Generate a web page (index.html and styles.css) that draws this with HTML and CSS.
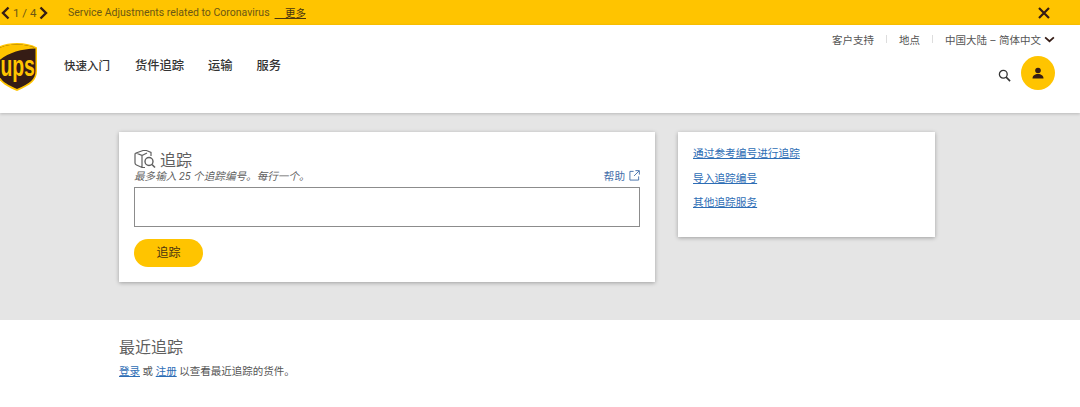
FILE: index.html
```html
<!DOCTYPE html>
<html lang="zh">
<head>
<meta charset="utf-8">
<title>UPS 追踪</title>
<link rel="stylesheet" href="styles.css">
</head>
<body>
<div class="alert">
  <div class="pager">
    <svg class="chev" viewBox="0 0 9 14" width="9" height="14"><path d="M7.500 1.500 2 7l5.500 5.500" fill="none" stroke="#351c15" stroke-width="2.400"/></svg>
    <span class="count">1 / 4</span>
    <svg class="chev" viewBox="0 0 9 14" width="9" height="14"><path d="M1.500 1.500 7 7l-5.500 5.500" fill="none" stroke="#351c15" stroke-width="2.400"/></svg>
  </div>
  <span class="alert-text">Service Adjustments related to Coronavirus</span>
  <a class="alert-more">&nbsp;&nbsp;&nbsp;&nbsp;更多</a>
  <svg class="close" viewBox="0 0 12 12" width="12" height="12"><path d="M1 1l10 10M11 1 1 11" stroke="#351c15" stroke-width="2.200"/></svg>
</div>
<header class="header">
  <svg class="logo" viewBox="0 0 40 48" width="40" height="48">
    <path d="M20 0C12 0 5 1.500 0 4.500V28c0 9 6 14 20 20 14-6 20-11 20-20V4.500C35 1.500 28 0 20 0Z" fill="#ffc400"/>
    <path d="M20 1.500C13 1.500 7 2.500 1.500 5.500V28c0 8 5.500 12.500 18.500 18 13-5.500 18.500-10 18.500-18V5.500C33 2.500 27 1.500 20 1.500Z" fill="#351c15"/>
    <path d="M1.500 5.500V18C10 10 24 6 38.500 5.500 33 2.500 27 1.500 20 1.500 13 1.500 7 2.500 1.500 5.500Z" fill="#ffc400"/>
    <text class="logo-text" x="3.400" y="33" textLength="34.500" lengthAdjust="spacingAndGlyphs">ups</text>
  </svg>
  <nav class="main-nav">
    <a class="nav-first">快速入门</a>
    <a>货件追踪</a>
    <a>运输</a>
    <a>服务</a>
  </nav>
  <div class="header-right">
    <div class="util">
      <a>客户支持</a><i></i><a>地点</a><i></i><a>中国大陆 – 简体中文</a>
      <svg viewBox="0 0 12 8" width="11" height="7"><path d="M1 1.500 6 6l5-4.500" fill="none" stroke="#351c15" stroke-width="2"/></svg>
    </div>
    <div class="actions">
      <svg class="search" viewBox="0 0 14 14" width="13" height="13"><circle cx="5.700" cy="5.700" r="4.200" fill="none" stroke="#333" stroke-width="1.400"/><path d="M8.800 8.800 13 13" stroke="#333" stroke-width="1.700"/></svg>
      <span class="avatar"><svg viewBox="0 0 12 12" width="12" height="12"><circle cx="6" cy="3.500" r="2.800" fill="#351c15"/><path d="M0.500 11.500c0-3 2.500-4.500 5.500-4.500s5.500 1.500 5.500 4.500Z" fill="#351c15"/></svg></span>
    </div>
  </div>
</header>
<main class="band">
  <section class="card track">
    <div class="title-row">
      <svg class="title-icon" viewBox="0 0 22 20" width="22" height="20"><path d="M2 4 9 1.500h3.500L17 3.500V7M2 4c-1 0-1 1-1 2v8c0 1 .5 1.500 1.500 2L8 18.500h3M2 4l6 2.500v12M8 6.500 13 4" fill="none" stroke="#5f5f5f" stroke-width="1.200"/><circle cx="15" cy="12.500" r="4" fill="none" stroke="#5f5f5f" stroke-width="1.400"/><path d="M18 15.500l3 3" stroke="#5f5f5f" stroke-width="1.600"/></svg>
      <h1>追踪</h1>
    </div>
    <div class="hint-row">
      <em>最多输入 25 个追踪编号。每行一个。</em>
      <a class="help">帮助
        <svg viewBox="0 0 12 12" width="11" height="11"><path d="M5 1.500H1v9.500h9.500V7M7 .7h4.300V5M11 1 5.500 6.500" fill="none" stroke="#426da9" stroke-width="1"/></svg>
      </a>
    </div>
    <div class="input"></div>
    <button class="btn">追踪</button>
  </section>
  <section class="card links">
    <a>通过参考编号进行追踪</a>
    <a>导入追踪编号</a>
    <a>其他追踪服务</a>
  </section>
</main>
<section class="recent">
  <h2>最近追踪</h2>
  <p><a>登录</a> 或 <a>注册</a> 以查看最近追踪的货件。</p>
</section>
</body>
</html>
```
FILE: styles.css
```css
* { box-sizing: border-box; }
html, body { margin: 0; padding: 0; }
body {
  width: 1080px;
  height: 407px;
  overflow: hidden;
  background: #fff;
  color: #333;
  font-family: Roboto, "Noto Sans CJK SC", sans-serif;
}
a { text-decoration: none; }
.alert {
  height: 25px;
  background: #ffc400;
  display: flex;
  align-items: center;
  color: #6b5714;
  font-size: 10.500px;
  padding-right: 30px;
}
.pager { display: flex; align-items: center; width: 68px; flex: none; padding-left: 1px; }
.count { font-size: 11.500px; margin: 0 3px; color: #6b5714; }
.alert-more { color: #4a3410; text-decoration: underline; white-space: pre; margin-left: 5px; }
.close { margin-left: auto; }
.header {
  height: 88px;
  display: flex;
  position: relative;
  box-shadow: 0 1px 3px rgba(0,0,0,.2);
}
.logo { flex: none; margin: 18px 0 0 -3px; }
.logo-text {
  font-family: "Liberation Sans", sans-serif;
  font-weight: 700;
  font-size: 29px;
  fill: #ffc400;
}
.main-nav {
  display: flex;
  align-items: baseline;
  gap: 24px;
  margin: 33px 0 0 28px;
  font-size: 12.250px;
  font-weight: 500;
  color: #333;
}
.main-nav a { line-height: 17px; }
.main-nav a.nav-first { font-size: 11.500px; margin-left: -1px; margin-right: 1px; }
.header-right {
  margin-left: auto;
  display: flex;
  flex-direction: column;
  align-items: flex-end;
  padding: 7px 25px 0 0;
}
.util { display: flex; align-items: center; font-size: 10.500px; color: #555; height: 14px; }
.util i { width: 1px; height: 8px; background: #ddd; margin: 0 12px; }
.util svg { margin-left: 3px; }
.actions { display: flex; align-items: center; gap: 10px; margin-top: 10px; }
.search { margin-top: 4px; }
.avatar {
  width: 34px;
  height: 34px;
  border-radius: 50%;
  background: #ffc400;
  display: flex;
  align-items: center;
  justify-content: center;
}
.band {
  height: 207px;
  background: #e5e5e5;
  display: flex;
  align-items: flex-start;
  gap: 23px;
  padding: 19px 0 0 119px;
}
.card { background: #fff; box-shadow: 0 1px 4px rgba(0,0,0,.3); }
.track { width: 536px; height: 150px; padding: 18px 15px 0; }
.title-row { display: flex; align-items: center; gap: 4px; height: 22px; }
.title-icon { margin: -5px 0 0 0; }
.title-row h1 { margin: 0; font-size: 16px; font-weight: 400; color: #5f5f5f; line-height: 22px; }
.hint-row { display: flex; justify-content: space-between; align-items: center; height: 16px; margin-top: -5px; font-size: 10.600px; color: #5f5f5f; }
.help { color: #426da9; display: flex; align-items: center; gap: 4px; }
.input { height: 40px; margin-top: 4px; border: 1px solid #8c8c8c; background: #fff; }
.btn {
  display: block;
  width: 69px;
  height: 28px;
  margin-top: 12px;
  border: 0;
  border-radius: 14px;
  background: #ffc400;
  color: #4a3410;
  font: 12px/24px Roboto, "Noto Sans CJK SC", sans-serif;
  padding: 0 0 1px;
}
.links {
  width: 257px;
  height: 105px;
  padding: 14px 15px 0;
  display: flex;
  flex-direction: column;
  align-items: flex-start;
  gap: 8.500px;
  font-size: 10.700px;
}
.links a { color: #2d6db5; text-decoration: underline; line-height: 16px; }
.recent { padding: 17px 0 0 119px; }
.recent h2 { margin: 0; font-size: 16px; font-weight: 400; color: #5f5f5f; line-height: 22px; }
.recent p { margin: 6px 0 0; font-size: 10.500px; line-height: 14px; color: #555; }
.recent a { color: #2d6db5; text-decoration: underline; }
```
